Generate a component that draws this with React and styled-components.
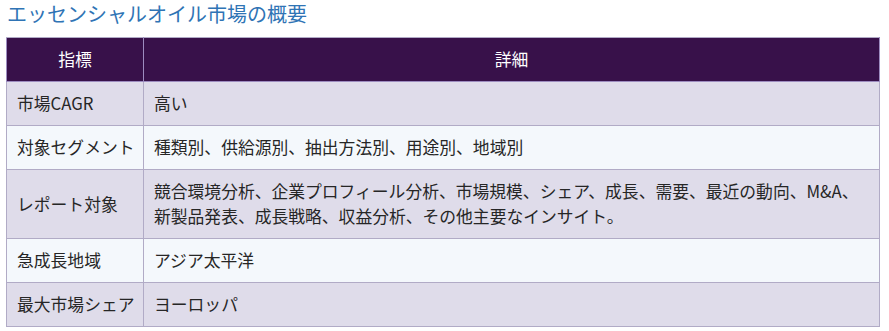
import React from "react";
import styled, { createGlobalStyle } from "styled-components";

const Global = createGlobalStyle`
  html, body { margin: 0; padding: 0; background: #ffffff; }
  body { font-family: "Noto Sans CJK JP", "Noto Sans", sans-serif; }
`;

const Page = styled.div`
  padding: 0 9px 0 6px;
  width: 874px;
`;

const Title = styled.h2`
  margin: 0 0 0 1px;
  font-size: 20px;
  line-height: 28px;
  font-weight: 400;
  color: #2f74b5;
`;

const Table = styled.table`
  margin-top: 9px;
  width: 100%;
  table-layout: fixed;
  border-collapse: collapse;
  font-size: 16.8px;
  line-height: 25px;
  color: #262626;
  border: 1px solid #b1abc6;
`;

const HeadCell = styled.th`
  background: #38114a;
  color: #ffffff;
  font-weight: 400;
  text-align: center;
  padding: 9px 10px;
  border: 1px solid #9d8cc0;
  border-top-color: #b1abc6;
  width: ${(p) => (p.$narrow ? "137px" : "auto")};
  box-sizing: border-box;
`;

const Row = styled.tr`
  background: ${(p) => (p.$odd ? "#dfdcea" : "#f4f8fc")};
`;

const Cell = styled.td`
  padding: 9px 10px;
  border: 1px solid #b1abc6;
  vertical-align: middle;
  white-space: ${(p) => (p.$nowrap ? "nowrap" : "normal")};
`;

const rows = [
  ["市場CAGR", "高い"],
  ["対象セグメント", "種類別、供給源別、抽出方法別、用途別、地域別"],
  [
    "レポート対象",
    "競合環境分析、企業プロフィール分析、市場規模、シェア、成長、需要、最近の動向、M&A、新製品発表、成長戦略、収益分析、その他主要なインサイト。",
  ],
  ["急成長地域", "アジア太平洋"],
  ["最大市場シェア", "ヨーロッパ"],
];

export default function App() {
  return (
    <>
      <Global />
      <Page>
        <Title>エッセンシャルオイル市場の概要</Title>
        <Table>
          <thead>
            <tr>
              <HeadCell $narrow>指標</HeadCell>
              <HeadCell>詳細</HeadCell>
            </tr>
          </thead>
          <tbody>
            {rows.map(([k, v], i) => (
              <Row key={k} $odd={i % 2 === 0}>
                <Cell $nowrap>{k}</Cell>
                <Cell>{v}</Cell>
              </Row>
            ))}
          </tbody>
        </Table>
      </Page>
    </>
  );
}
